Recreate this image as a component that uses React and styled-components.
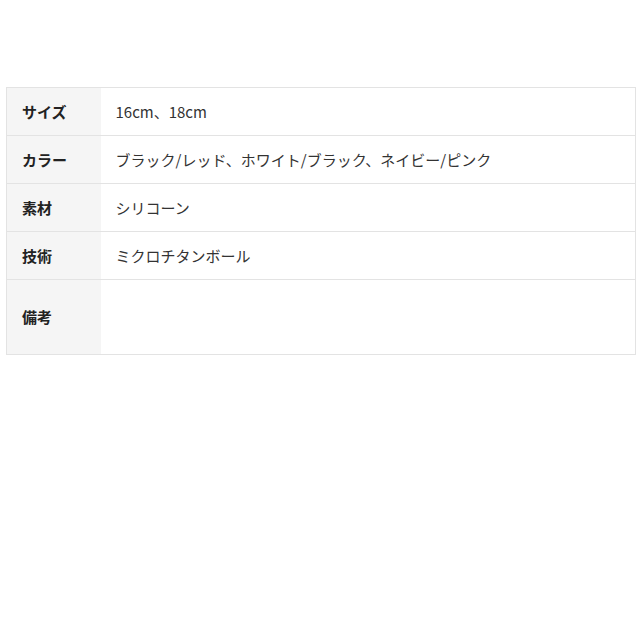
import React from 'react'
import styled, { createGlobalStyle } from 'styled-components'

const Global = createGlobalStyle`
  body {
    margin: 0;
    background: #fff;
    font-family: "Noto Sans CJK JP", "Noto Sans", sans-serif;
    color: #333;
  }
`

const Page = styled.div`
  padding: 87px 5px 0 6px;
`

const Table = styled.table`
  width: 630px;
  border-collapse: collapse;
  border: 1px solid #e3e3e3;
  font-size: 15px;
`

const Row = styled.tr`
  height: ${p => p.tall ? 75 : 48}px;
  border-bottom: 1px solid #e3e3e3;
`

const Label = styled.th`
  width: 94px;
  box-sizing: border-box;
  background: #f5f5f5;
  text-align: left;
  font-weight: bold;
  padding: 0 0 1px 15px;
  color: #222;
`

const Value = styled.td`
  padding: 0 0 1px 15px;
  color: #333;
`

const specs = [
  ['サイズ', '16cm、18cm'],
  ['カラー', 'ブラック/レッド、ホワイト/ブラック、ネイビー/ピンク'],
  ['素材', 'シリコーン'],
  ['技術', 'ミクロチタンボール'],
  ['備考', '', true],
]

export default function App() {
  return (
    <Page>
      <Global />
      <Table>
        <tbody>
          {specs.map(([k, v, tall]) => (
            <Row key={k} tall={tall}>
              <Label>{k}</Label>
              <Value>{v}</Value>
            </Row>
          ))}
        </tbody>
      </Table>
    </Page>
  )
}
